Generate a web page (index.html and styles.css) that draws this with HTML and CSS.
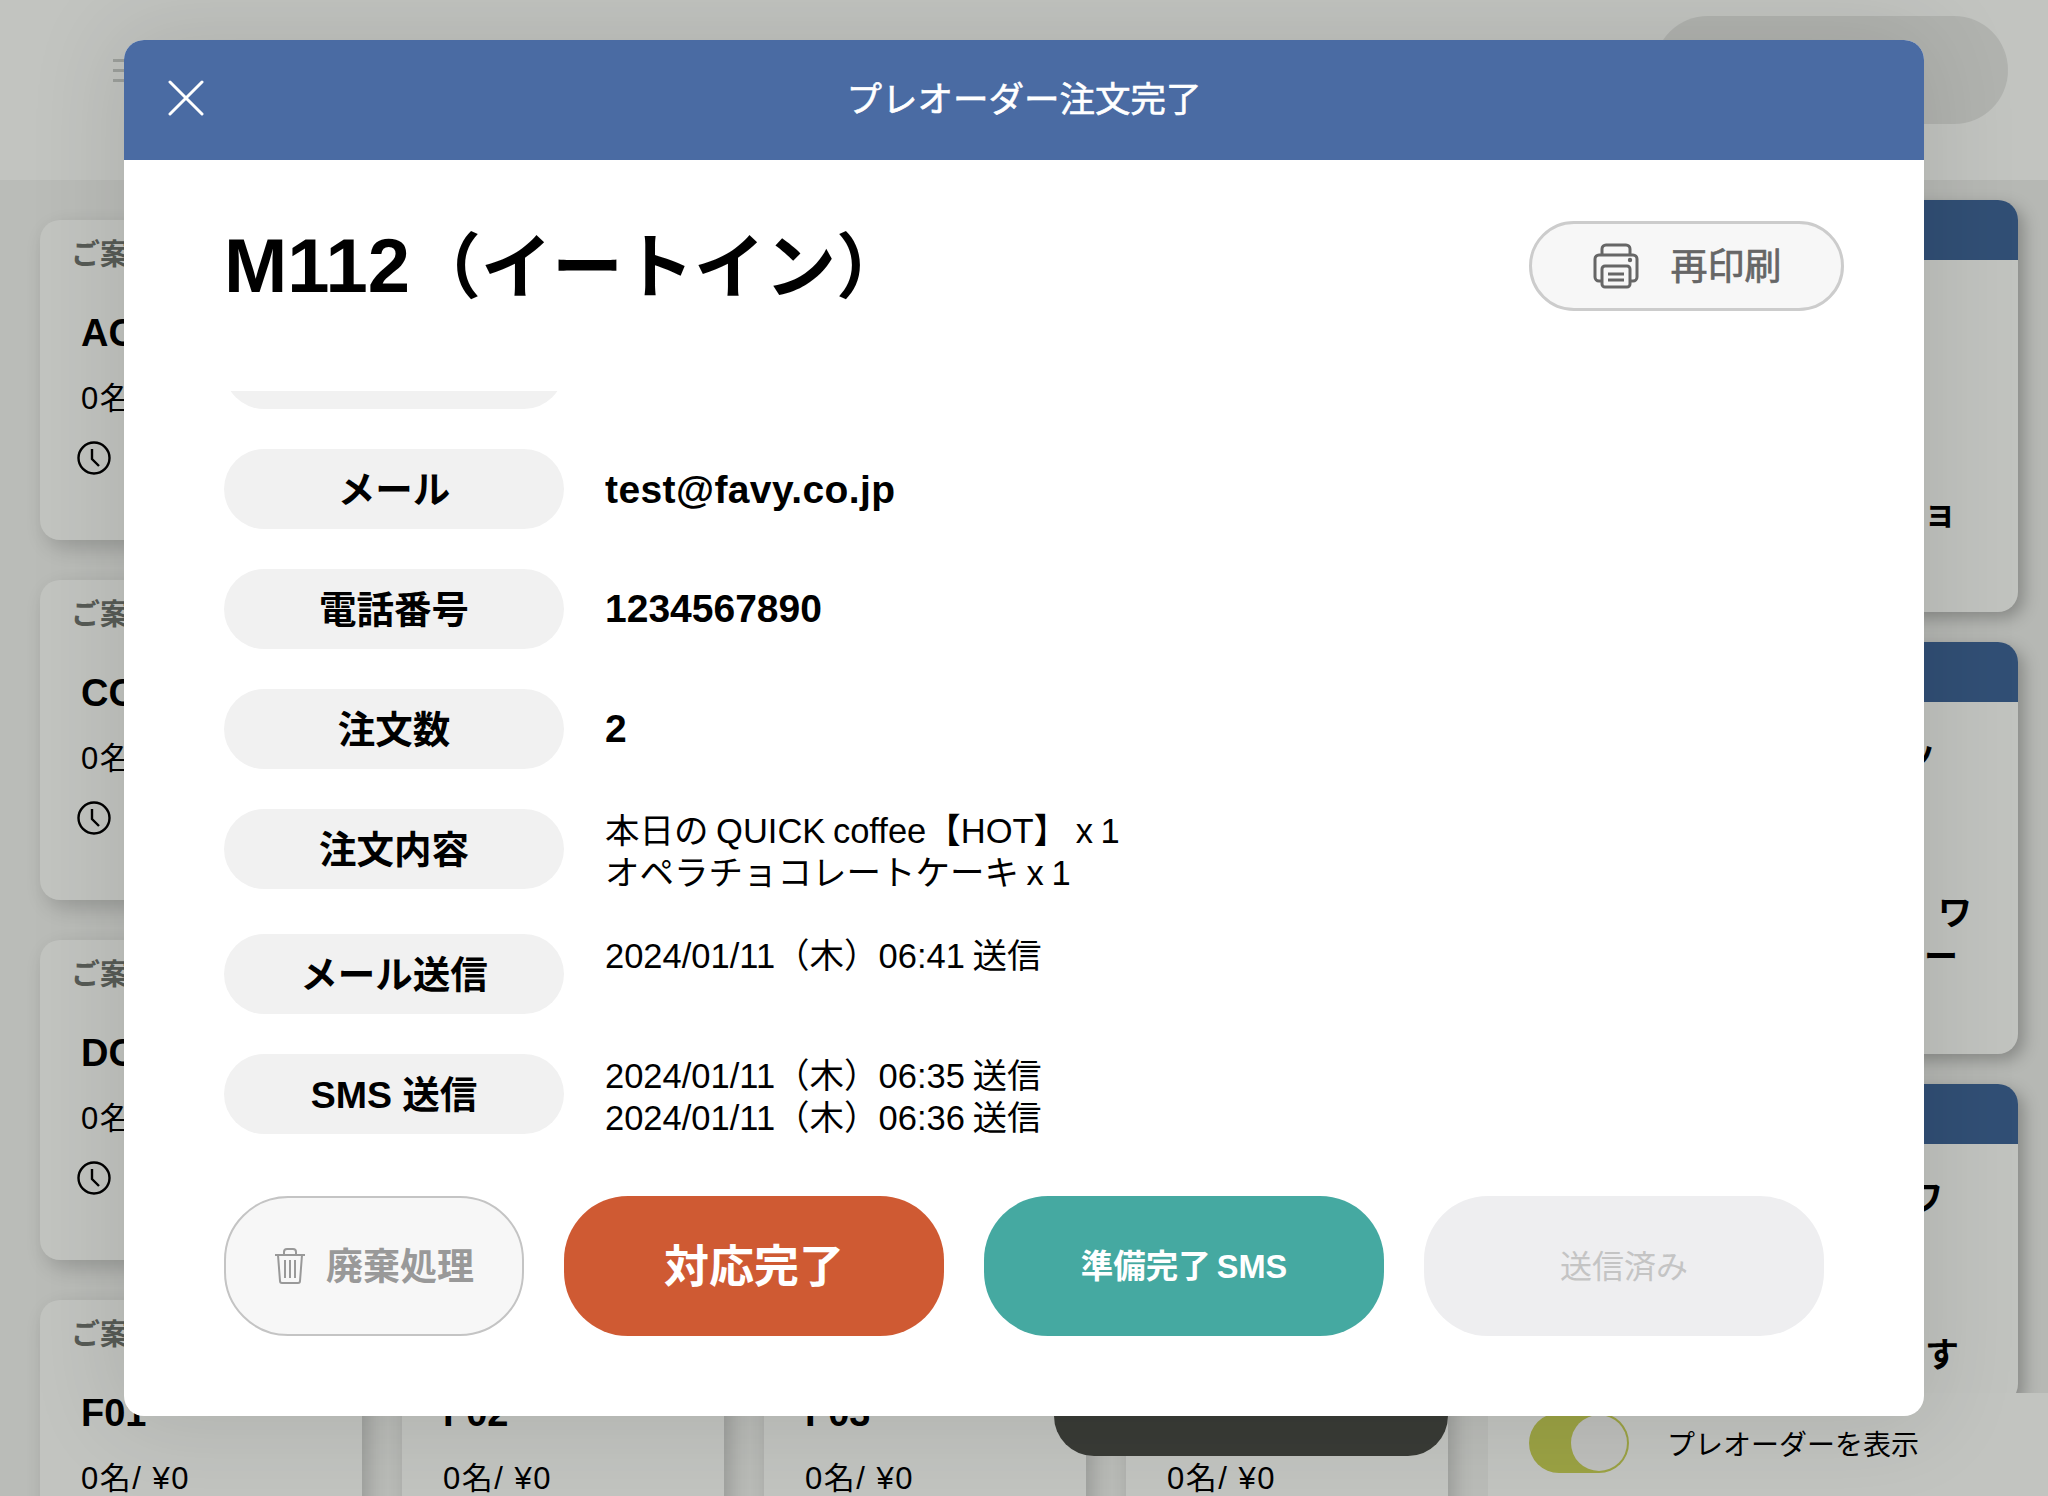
FILE: index.html
```html
<!DOCTYPE html>
<html lang="ja">
<head>
<meta charset="utf-8">
<title>プレオーダー注文完了</title>
<link rel="stylesheet" href="styles.css">
</head>
<body>
<svg class="defs" width="0" height="0" aria-hidden="true"><symbol id="clock" viewBox="0 0 34 34"><circle cx="17" cy="17" r="15.5" fill="none" stroke="currentColor" stroke-width="2.4"/><path d="M15 8v10l7 7" fill="none" stroke="currentColor" stroke-width="2.4"/></symbol></svg>
<div class="app">
  <header class="topbar">
    <div class="menu"><span></span><span></span><span></span></div>
    <div class="search"></div>
  </header>
  <main class="main">
    <section class="grid">
      <article class="card"><p class="state">ご案内中</p><h3 class="name">AC1</h3><p class="meta">0名/ ¥0</p><svg class="clock"><use href="#clock"/></svg></article>
      <article class="card"><p class="state">ご案内中</p><h3 class="name">AC2</h3><p class="meta">0名/ ¥0</p><svg class="clock"><use href="#clock"/></svg></article>
      <article class="card"><p class="state">ご案内中</p><h3 class="name">AC3</h3><p class="meta">0名/ ¥0</p><svg class="clock"><use href="#clock"/></svg></article>
      <article class="card"><p class="state">ご案内中</p><h3 class="name">AC4</h3><p class="meta">0名/ ¥0</p><svg class="clock"><use href="#clock"/></svg></article>
      <article class="card"><p class="state">ご案内中</p><h3 class="name">CC1</h3><p class="meta">0名/ ¥0</p><svg class="clock"><use href="#clock"/></svg></article>
      <article class="card"><p class="state">ご案内中</p><h3 class="name">CC2</h3><p class="meta">0名/ ¥0</p><svg class="clock"><use href="#clock"/></svg></article>
      <article class="card"><p class="state">ご案内中</p><h3 class="name">CC3</h3><p class="meta">0名/ ¥0</p><svg class="clock"><use href="#clock"/></svg></article>
      <article class="card"><p class="state">ご案内中</p><h3 class="name">CC4</h3><p class="meta">0名/ ¥0</p><svg class="clock"><use href="#clock"/></svg></article>
      <article class="card"><p class="state">ご案内中</p><h3 class="name">DC1</h3><p class="meta">0名/ ¥0</p><svg class="clock"><use href="#clock"/></svg></article>
      <article class="card"><p class="state">ご案内中</p><h3 class="name">DC2</h3><p class="meta">0名/ ¥0</p><svg class="clock"><use href="#clock"/></svg></article>
      <article class="card"><p class="state">ご案内中</p><h3 class="name">DC3</h3><p class="meta">0名/ ¥0</p><svg class="clock"><use href="#clock"/></svg></article>
      <article class="card"><p class="state">ご案内中</p><h3 class="name">DC4</h3><p class="meta">0名/ ¥0</p><svg class="clock"><use href="#clock"/></svg></article>
      <article class="card"><p class="state">ご案内中</p><h3 class="name">F01</h3><p class="meta">0名/ ¥0</p><svg class="clock"><use href="#clock"/></svg></article>
      <article class="card"><p class="state">ご案内中</p><h3 class="name">F02</h3><p class="meta">0名/ ¥0</p><svg class="clock"><use href="#clock"/></svg></article>
      <article class="card"><p class="state">ご案内中</p><h3 class="name">F03</h3><p class="meta">0名/ ¥0</p><svg class="clock"><use href="#clock"/></svg></article>
      <article class="card"><p class="state">ご案内中</p><h3 class="name">F04</h3><p class="meta">0名/ ¥0</p><svg class="clock"><use href="#clock"/></svg></article>
    </section>
    <aside class="side">
      <div class="orders">
        <article class="order"><div class="order-head"></div><p class="line r1-a">チョ</p></article>
        <article class="order"><div class="order-head"></div><p class="line r2-a">ッ</p><p class="line r2-b">ワ</p><p class="line r2-c">ー</p></article>
        <article class="order"><div class="order-head"></div><p class="line r3-a">ワ</p><p class="line r3-b">す</p></article>
      </div>
      <div class="side-foot">
        <span class="toggle"><span class="thumb"></span></span>
        <span class="toggle-label">プレオーダーを表示</span>
      </div>
    </aside>
  </main>
  <div class="dark-pill"></div>

  <div class="modal">
    <div class="modal-head">
      <svg class="close" viewBox="0 0 36 36"><path d="M2 2l32 32M34 2L2 34" fill="none" stroke="#fff" stroke-width="3" stroke-linecap="round"/></svg>
      <h2 class="modal-title">プレオーダー注文完了</h2>
    </div>
    <div class="title-row">
      <h1 class="order-title"><span class="order-code">M112</span>（イートイン）</h1>
      <button class="reprint">
        <svg class="printer" viewBox="0 0 48 46"><g fill="none" stroke="#666" stroke-width="3"><path d="M10 12V6a4 4 0 0 1 4-4h20a4 4 0 0 1 4 4v6"/><path d="M10 38H7a4 4 0 0 1-4-4V16a4 4 0 0 1 4-4h34a4 4 0 0 1 4 4v18a4 4 0 0 1-4 4h-3"/><rect x="10" y="23" width="28" height="21" rx="3"/><path d="M16 31h16M16 37h16"/></g><circle cx="38" cy="17" r="2.2" fill="#666"/></svg>
        <span class="reprint-text">再印刷</span>
      </button>
    </div>
    <div class="details">
      <div class="row first"><div class="label"><span>名前</span></div><div class="value strong">テスト</div></div>
      <div class="row"><div class="label"><span>メール</span></div><div class="value strong email">test@favy.co.jp</div></div>
      <div class="row"><div class="label"><span>電話番号</span></div><div class="value strong">1234567890</div></div>
      <div class="row"><div class="label"><span>注文数</span></div><div class="value strong">2</div></div>
      <div class="row extended"><div class="label"><span>注文内容</span></div><div class="value">本日の QUICK coffee【HOT】 x 1<br>オペラチョコレートケーキ x 1</div></div>
      <div class="row"><div class="label"><span>メール送信</span></div><div class="value">2024/01/11（木）06:41 送信</div></div>
      <div class="row"><div class="label"><span>SMS 送信</span></div><div class="value">2024/01/11（木）06:35 送信<br>2024/01/11（木）06:36 送信</div></div>
    </div>
    <div class="actions">
      <button class="btn discard">
        <svg class="trash" viewBox="0 0 32 36"><g fill="none" stroke="#999" stroke-width="2"><path d="M1 7h30M10 7V4a3 3 0 0 1 3-3h6a3 3 0 0 1 3 3v3"/><path d="M4 7l2 26a2 2 0 0 0 2 2h16a2 2 0 0 0 2-2l2-26"/><path d="M11 12v18M16 12v18M21 12v18"/></g></svg>
        <span>廃棄処理</span>
      </button>
      <button class="btn done"><span>対応完了</span></button>
      <button class="btn sms"><span>準備完了 SMS</span></button>
      <button class="btn sent"><span>送信済み</span></button>
    </div>
  </div>
</div>
</body>
</html>
```
FILE: styles.css
```css
* { box-sizing: border-box; }
html, body { margin: 0; padding: 0; }
body {
  width: 2048px;
  height: 1496px;
  overflow: hidden;
  font-family: "Liberation Sans", "Noto Sans CJK JP", sans-serif;
  color: #000;
}
.defs { position: absolute; }
.app {
  position: relative;
  width: 2048px;
  height: 1496px;
  overflow: hidden;
  background: #babcb8;
}
.topbar {
  height: 180px;
  background: #c2c4c0;
  display: flex;
  align-items: flex-start;
  justify-content: space-between;
  padding: 16px 40px 0 113px;
}
.menu {
  margin-top: 43px;
  width: 24px;
  display: flex;
  flex-direction: column;
  gap: 7px;
}
.menu span { display: block; height: 3px; background: #9da09c; }
.search {
  width: 354px;
  height: 108px;
  border-radius: 54px;
  background: #b1b3af;
}
.main { display: flex; height: 1316px; gap: 40px; padding-left: 40px; }
.grid {
  width: 1408px;
  flex: none;
  padding-top: 40px;
  display: grid;
  grid-template-columns: repeat(4, 322px);
  grid-auto-rows: 320px;
  gap: 40px 40px;
}
.card {
  background: #c2c4c0;
  border-radius: 20px;
  padding: 17px 0 0 32px;
  box-shadow: 6px 8px 20px rgba(0, 0, 0, .18);
}
.state { margin: 0 0 0 -1px; font-size: 29px; line-height: 36px; font-weight: 700; color: #575b56; white-space: nowrap; }
.name { margin: 38px 0 0 9px; font-size: 38px; line-height: 44px; font-weight: 700; }
.meta { margin: 26px 0 0 9px; font-size: 31px; line-height: 36px; letter-spacing: 1.5px; white-space: nowrap; }
.clock { display: block; margin: 24px 0 0 5px; width: 34px; height: 34px; color: #000; }
.side { flex: 1; display: flex; flex-direction: column; background: #c2c4c0; }
.orders {
  height: 1213px;
  padding: 20px 30px 0 30px;
  background: #b6b8b4;
  display: flex;
  flex-direction: column;
  gap: 30px;
  overflow: hidden;
}
.order {
  flex: none;
  height: 412px;
  background: #c1c3bf;
  border-radius: 20px;
  overflow: hidden;
  box-shadow: 6px 6px 16px rgba(0, 0, 0, .25);
}
.order:last-child { height: 320px; }
.order-head { height: 60px; background: #314f75; }
.line {
  margin: 0;
  font-size: 34px;
  line-height: 44px;
  font-weight: 700;
  text-align: right;
  white-space: nowrap;
}
.r1-a { margin-top: 231px; padding-right: 61px; }
.r2-a { margin-top: 29px; padding-right: 82px; }
.r2-b { margin-top: 116px; padding-right: 46px; }
.r2-c { padding-right: 60px; }
.r3-a { margin-top: 32px; padding-right: 75px; }
.r3-b { margin-top: 113px; padding-right: 59px; }
.side-foot {
  flex: 1;
  display: flex;
  align-items: center;
  padding: 0 0 3px 41px;
  gap: 38px;
}
.toggle {
  width: 100px;
  height: 60px;
  border-radius: 30px;
  background: #9ba244;
  display: flex;
  align-items: center;
  justify-content: flex-end;
  padding-right: 2px;
}
.thumb { width: 56px; height: 56px; border-radius: 50%; background: #bebfbc; }
.toggle-label { font-size: 28px; white-space: nowrap; }
.dark-pill {
  position: absolute;
  left: 1054px;
  top: 1300px;
  width: 394px;
  height: 156px;
  border-radius: 40px;
  background: #393b36;
}
.modal {
  position: absolute;
  left: 124px;
  top: 40px;
  width: 1800px;
  height: 1376px;
  background: #fff;
  border-radius: 20px;
  overflow: hidden;
  box-shadow: 0 0 90px 10px rgba(0, 0, 0, .1);
}
.modal-head {
  height: 120px;
  background: #4a6ba3;
  position: relative;
  display: flex;
  align-items: center;
  justify-content: center;
}
.close { position: absolute; left: 44px; top: 40px; width: 36px; height: 36px; }
.modal-title {
  margin: 0;
  padding-top: 2px;
  color: #fff;
  font-size: 35.5px;
  font-weight: 400;
  line-height: 1;
  -webkit-text-stroke: .6px #fff;
}
.title-row {
  margin: 61px 80px 0 100px;
  height: 89px;
  display: flex;
  align-items: center;
  justify-content: space-between;
}
.order-title { margin: 0; font-size: 71px; font-weight: 700; line-height: 1; white-space: nowrap; }
.order-code { font-size: 76px; }
.reprint {
  width: 315px;
  height: 90px;
  border: 3px solid #ccc;
  border-radius: 45px;
  background: #f7f7f7;
  display: flex;
  align-items: center;
  justify-content: center;
  gap: 31px;
  font: 400 37px "Liberation Sans", "Noto Sans CJK JP", sans-serif;
  color: #666;
  padding: 0;
}
.reprint-text { -webkit-text-stroke: .7px #666; padding-bottom: 4px; }
.printer { width: 48px; height: 46px; }
.details {
  margin: 81px 81px 0 100px;
  height: 763px;
  overflow: hidden;
  display: flex;
  flex-direction: column;
  gap: 40px;
}
.row { display: flex; gap: 41px; flex: none; height: 80px; }
.row.first { margin-top: -62px; }
.row.extended { margin-bottom: 5px; }
.label {
  width: 340px;
  height: 80px;
  flex: none;
  border-radius: 40px;
  background: #f1f1f1;
  display: flex;
  align-items: center;
  justify-content: center;
  padding-bottom: 5px;
  font-size: 37.5px;
  font-weight: 700;
}
.value { padding-top: 1px; font-size: 34.5px; line-height: 42px; white-space: nowrap; word-spacing: -2px; }
.value.strong { padding-top: 0; font-size: 39px; font-weight: 700; line-height: 80px; word-spacing: 0; }
.value.email { line-height: 82px; letter-spacing: .4px; }
.actions { margin: 42px 0 0 100px; display: flex; gap: 40px; }
.btn {
  height: 140px;
  border: 0;
  border-radius: 64px;
  padding: 0 0 5px;
  display: flex;
  align-items: center;
  justify-content: center;
  font-family: "Liberation Sans", "Noto Sans CJK JP", sans-serif;
}
.discard {
  width: 300px;
  background: #f7f7f7;
  border: 2px solid #c4c4c4;
  color: #999;
  font-size: 37px;
  font-weight: 700;
  gap: 20px;
}
.trash { width: 32px; height: 36px; margin-top: 5px; }
.done { width: 380px; background: #cf5a33; color: #fff; font-size: 45px; font-weight: 700; }
.sms { width: 400px; background: #45a9a1; color: #fff; font-size: 32.5px; font-weight: 700; word-spacing: -3px; }
.sent { width: 400px; background: #eeeef0; color: #c4c4c4; font-size: 32px; font-weight: 400; }
```
